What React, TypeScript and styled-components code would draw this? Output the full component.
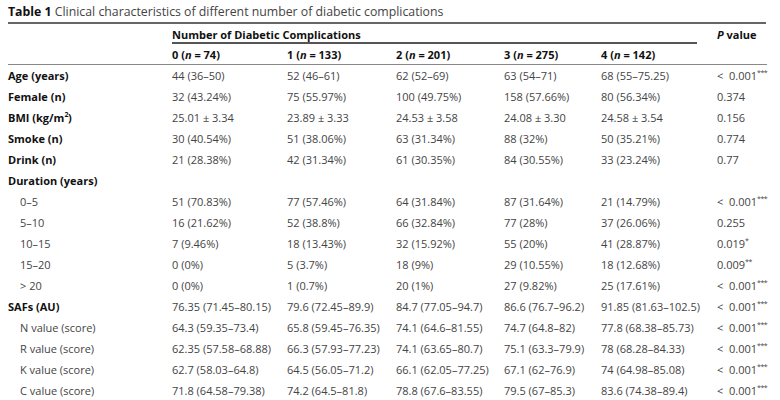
import React from "react";
import styled, { createGlobalStyle } from "styled-components";

const GlobalStyle = createGlobalStyle`
  html, body {
    margin: 0;
    padding: 0;
    background: #fff;
  }
  body {
    font-family: "Open Sans", "Noto Sans", sans-serif;
  }
`;

const Page = styled.div`
  width: 758px;
  padding: 0 14px 0 8px;
`;

const Caption = styled.div`
  height: 22px;
  display: flex;
  align-items: center;
  font-size: 12.3px;
  color: #444;
  border-bottom: 2px solid #666;
  white-space: nowrap;
  b {
    color: #111;
    font-weight: 700;
  }
`;

const Grid = styled.div`
  display: grid;
  grid-template-columns: 164px 115px 109px 108px 97px 116px 1fr;
`;

const HeadCell = styled.div<{ $span?: number; $rule?: boolean }>`
  grid-column: span ${({ $span }) => $span ?? 1};
  height: 20px;
  display: flex;
  align-items: center;
  font-size: 11px;
  font-weight: 700;
  color: #111;
  white-space: nowrap;
  ${({ $rule }) => ($rule ? "border-bottom: 1px solid #888;" : "")}
  i {
    font-style: italic;
  }
`;

const GroupTitle = styled.span`
  display: flex;
  align-items: center;
  width: 525px;
  height: 100%;
  border-bottom: 2px solid #555;
  box-sizing: border-box;
  padding-top: 2px;
`;

const Cell = styled.div<{ $label?: boolean; $indent?: boolean }>`
  height: 21px;
  display: flex;
  align-items: center;
  font-size: 11px;
  white-space: pre;
  color: ${({ $label, $indent }) => ($label && !$indent ? "#111" : "#444")};
  font-weight: ${({ $label, $indent }) => ($label && !$indent ? 700 : 400)};
  padding-left: ${({ $indent }) => ($indent ? "12px" : "0")};
  sup {
    font-size: 7px;
    align-self: flex-start;
    margin-top: 3px;
    letter-spacing: -0.5px;
  }
`;

const Sq = styled.sup`
  font-size: 8px;
  align-self: flex-start;
  margin-top: 2px;
`;

type Row = {
  label: React.ReactNode;
  sub?: boolean;
  values: string[];
  p: string;
  stars?: string;
};

const rows: Row[] = [
  { label: "Age (years)", values: ["44 (36–50)", "52 (46–61)", "62 (52–69)", "63 (54–71)", "68 (55–75.25)"], p: "<  0.001", stars: "***" },
  { label: "Female (n)", values: ["32 (43.24%)", "75 (55.97%)", "100 (49.75%)", "158 (57.66%)", "80 (56.34%)"], p: "0.374" },
  { label: <>BMI (kg/m<Sq>2</Sq>)</>, values: ["25.01 ± 3.34", "23.89 ± 3.33", "24.53 ± 3.58", "24.08 ± 3.30", "24.58 ± 3.54"], p: "0.156" },
  { label: "Smoke (n)", values: ["30 (40.54%)", "51 (38.06%)", "63 (31.34%)", "88 (32%)", "50 (35.21%)"], p: "0.774" },
  { label: "Drink (n)", values: ["21 (28.38%)", "42 (31.34%)", "61 (30.35%)", "84 (30.55%)", "33 (23.24%)"], p: "0.77" },
  { label: "Duration (years)", values: ["", "", "", "", ""], p: "" },
  { label: "0–5", sub: true, values: ["51 (70.83%)", "77 (57.46%)", "64 (31.84%)", "87 (31.64%)", "21 (14.79%)"], p: "<  0.001", stars: "***" },
  { label: "5–10", sub: true, values: ["16 (21.62%)", "52 (38.8%)", "66 (32.84%)", "77 (28%)", "37 (26.06%)"], p: "0.255" },
  { label: "10–15", sub: true, values: ["7 (9.46%)", "18 (13.43%)", "32 (15.92%)", "55 (20%)", "41 (28.87%)"], p: "0.019", stars: "*" },
  { label: "15–20", sub: true, values: ["0 (0%)", "5 (3.7%)", "18 (9%)", "29 (10.55%)", "18 (12.68%)"], p: "0.009", stars: "**" },
  { label: "> 20", sub: true, values: ["0 (0%)", "1 (0.7%)", "20 (1%)", "27 (9.82%)", "25 (17.61%)"], p: "<  0.001", stars: "***" },
  { label: "SAFs (AU)", values: ["76.35 (71.45–80.15)", "79.6 (72.45–89.9)", "84.7 (77.05–94.7)", "86.6 (76.7–96.2)", "91.85 (81.63–102.5)"], p: "<  0.001", stars: "***" },
  { label: "N value (score)", sub: true, values: ["64.3 (59.35–73.4)", "65.8 (59.45–76.35)", "74.1 (64.6–81.55)", "74.7 (64.8–82)", "77.8 (68.38–85.73)"], p: "<  0.001", stars: "***" },
  { label: "R value (score)", sub: true, values: ["62.35 (57.58–68.88)", "66.3 (57.93–77.23)", "74.1 (63.65–80.7)", "75.1 (63.3–79.9)", "78 (68.28–84.33)"], p: "<  0.001", stars: "***" },
  { label: "K value (score)", sub: true, values: ["62.7 (58.03–64.8)", "64.5 (56.05–71.2)", "66.1 (62.05–77.25)", "67.1 (62–76.9)", "74 (64.98–85.08)"], p: "<  0.001", stars: "***" },
  { label: "C value (score)", sub: true, values: ["71.8 (64.58–79.38)", "74.2 (64.5–81.8)", "78.8 (67.6–83.55)", "79.5 (67–85.3)", "83.6 (74.38–89.4)"], p: "<  0.001", stars: "***" },
];

const groups = [
  ["0", "74"],
  ["1", "133"],
  ["2", "201"],
  ["3", "275"],
  ["4", "142"],
];

export default function App() {
  return (
    <Page>
      <GlobalStyle />
      <Caption>
        <b>Table 1</b>&nbsp;Clinical characteristics of different number of diabetic complications
      </Caption>
      <Grid>
        <HeadCell />
        <HeadCell $span={5}>
          <GroupTitle>Number of Diabetic Complications</GroupTitle>
        </HeadCell>
        <HeadCell>
          <i>P</i>&nbsp;value
        </HeadCell>
        <HeadCell $rule />
        {groups.map(([k, n]) => (
          <HeadCell key={k} $rule>
            {k}&nbsp;(<i>n</i>&nbsp;=&nbsp;{n})
          </HeadCell>
        ))}
        <HeadCell $rule />
        {rows.map((r, i) => (
          <React.Fragment key={i}>
            <Cell $label $indent={r.sub}>{r.label}</Cell>
            {r.values.map((v, j) => (
              <Cell key={j}>{v}</Cell>
            ))}
            <Cell>
              {r.p}
              {r.stars && <sup>{r.stars}</sup>}
            </Cell>
          </React.Fragment>
        ))}
      </Grid>
    </Page>
  );
}
